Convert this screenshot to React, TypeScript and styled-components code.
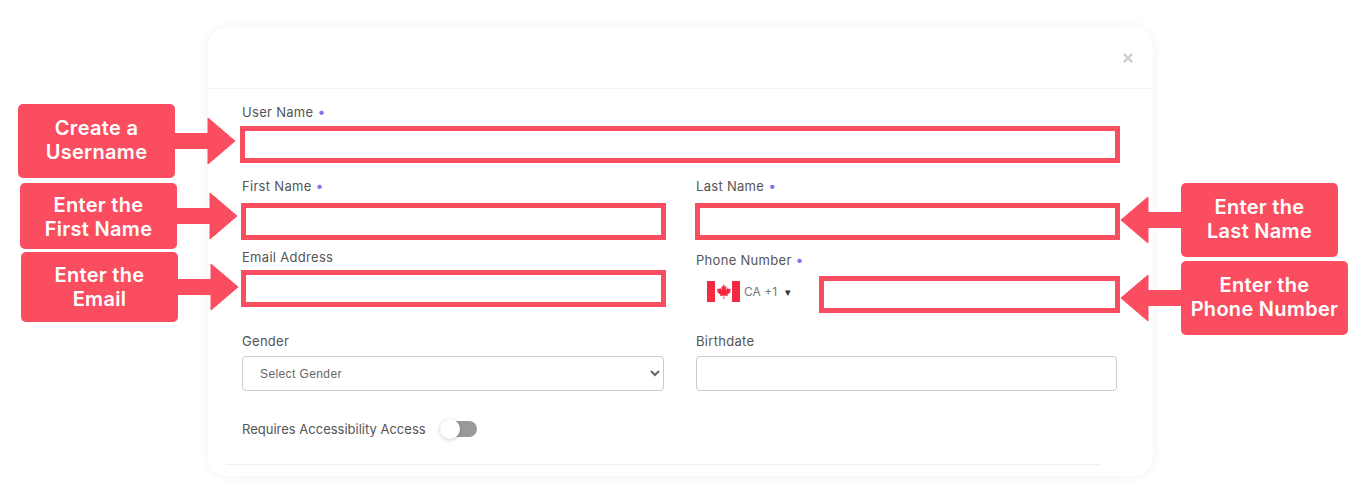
import styled, { createGlobalStyle } from 'styled-components';
import { FaTimes } from 'react-icons/fa';

const GlobalStyle = createGlobalStyle`
  html, body {
    margin: 0;
    background: #fff;
    font-family: 'Inter', 'Liberation Sans', sans-serif;
  }
  * {
    box-sizing: border-box;
  }
`;

const callouts = [
  { x: 18, y: 104, w: 157, h: 74, arrowTop: 14, side: 'left', drop: -1, lines: ['Create a', 'Username'] },
  { x: 20, y: 183, w: 157, h: 66, arrowTop: 10, side: 'left', drop: 1, lines: ['Enter the', 'First Name'] },
  { x: 21, y: 252, w: 157, h: 70, arrowTop: 12, side: 'left', drop: 0, lines: ['Enter the', 'Email'] },
  { x: 1181, y: 183, w: 157, h: 74, arrowTop: 14, side: 'right', drop: -1, lines: ['Enter the', 'Last Name'] },
  { x: 1181, y: 261, w: 167, h: 74, arrowTop: 14, side: 'right', drop: -1, lines: ['Enter the', 'Phone Number'] },
];

export default function App() {
  return (
    <Page>
      <GlobalStyle />
      <Modal>
        <Header>
          <CloseIcon />
        </Header>
        <Body>
          <Row $top={16}>
            <Field $wide>
              <Label $gap={5}>
                User Name <Dot>•</Dot>
              </Label>
              <MarkedInput $left={2} $right={3} />
            </Field>
          </Row>
          <Row $top={16}>
            <Field>
              <Label $gap={8}>
                First Name <Dot>•</Dot>
              </Label>
              <MarkedInput $left={1} $right={2} />
            </Field>
            <Field>
              <Label $gap={8}>
                Last Name <Dot>•</Dot>
              </Label>
              <MarkedInput $left={1} $right={3} />
            </Field>
          </Row>
          <Row $top={10}>
            <Field>
              <Label $gap={4}>Email Address</Label>
              <MarkedInput $left={1} $right={2} />
            </Field>
            <Field $offset={3}>
              <Label $gap={7}>
                Phone Number <Dot>•</Dot>
              </Label>
              <PhoneRow>
                <CountryPicker>
                  <CanadaFlag />
                  <CountryCode>CA +1</CountryCode>
                  <Caret>▾</Caret>
                </CountryPicker>
                <MarkedInput $left={2} $right={3} />
              </PhoneRow>
            </Field>
          </Row>
          <Row $top={21}>
            <Field>
              <Label $gap={6}>Gender</Label>
              <GenderSelect defaultValue=''>
                <option value=''>Select Gender</option>
              </GenderSelect>
            </Field>
            <Field>
              <Label $gap={6}>Birthdate</Label>
              <PlainInput />
            </Field>
          </Row>
          <ToggleRow>
            <ToggleLabel>Requires Accessibility Access</ToggleLabel>
            <Toggle>
              <Knob />
            </Toggle>
          </ToggleRow>
          <FooterRule />
        </Body>
      </Modal>

      {callouts.map((c) => (
        <Callout key={c.lines.join()} $x={c.x} $y={c.y} $w={c.w} $h={c.h} $drop={c.drop}>
          {c.lines.map((line) => (
            <span key={line}>{line}</span>
          ))}
          <Arrow $side={c.side} $top={c.arrowTop} viewBox='-1 -1 62 48'>
            <path d='M0 15.5H33V0L60 23L33 46V30.5H0Z' />
          </Arrow>
        </Callout>
      ))}
    </Page>
  );
}

function CanadaFlag() {
  return (
    <svg width='33' height='21' viewBox='0 0 33 21'>
      <rect width='33' height='21' fill='#fff' />
      <rect width='8' height='21' fill='#f5293f' />
      <rect x='25' width='8' height='21' fill='#f5293f' />
      <path
        d='M16.5 3l1.5 2.8 1.5-.7-.6 3.6 2-2 .5 1.4 2.4-.4-.8 2.5 1 .6-3.6 3 .4 1.300-3.600-.5.200 3.400h-1l.200-3.400-3.600.5.400-1.300-3.600-3 1-.6-.8-2.500 2.400.4.500-1.400 2 2-.6-3.600 1.500.7z'
        fill='#f5293f'
      />
    </svg>
  );
}

const Page = styled.div`
  position: relative;
  width: 1368px;
  height: 499px;
  overflow: hidden;
  padding: 27px 0 0 208px;
`;

const Modal = styled.div`
  width: 945px;
  height: 449px;
  background: #fff;
  border-radius: 20px;
  box-shadow: 0 0 12px rgba(0, 0, 0, 0.06);
`;

const Header = styled.div`
  height: 62px;
  display: flex;
  align-items: center;
  justify-content: flex-end;
  padding: 0 18px 0 0;
  border-bottom: 1px solid #f3f3f3;
`;

const CloseIcon = styled(FaTimes)`
  font-size: 14px;
  color: #d0d0d0;
  margin-top: 1px;
`;

const Body = styled.div`
  padding: 0 36px 0 34px;
`;

const Row = styled.div<{ $top: number }>`
  display: grid;
  grid-template-columns: 422px 421px;
  column-gap: 32px;
  align-items: start;
  margin-top: ${(p) => p.$top}px;
`;

const Field = styled.div<{ $wide?: boolean; $offset?: number }>`
  grid-column: ${(p) => (p.$wide ? '1 / -1' : 'auto')};
  padding-top: ${(p) => p.$offset || 0}px;
`;

const Label = styled.div<{ $gap: number }>`
  height: 16px;
  line-height: 14px;
  font-size: 13px;
  letter-spacing: 0.3px;
  color: #555;
  margin-bottom: ${(p) => p.$gap}px;
`;

const Dot = styled.span`
  color: #7b76f0;
  font-size: 14px;
`;

const MarkedInput = styled.input<{ $left: number; $right: number }>`
  display: block;
  width: calc(100% + ${(p) => p.$left + p.$right}px);
  min-width: 0;
  height: 37px;
  margin: 0 ${(p) => -p.$right}px 0 ${(p) => -p.$left}px;
  padding: 0;
  background: #fff;
  border: 5px solid #fb4d60;
  border-radius: 0;
  outline: none;
`;

const PlainInput = styled.input`
  display: block;
  width: 100%;
  height: 35px;
  background: #fff;
  border: 1px solid #ccc;
  border-radius: 4px;
  outline: none;
`;

const GenderSelect = styled.select`
  display: block;
  width: 100%;
  height: 35px;
  padding-left: 13px;
  background: #fff;
  border: 1px solid #ccc;
  border-radius: 4px;
  font-family: 'Liberation Sans', Arial, sans-serif;
  font-size: 12px;
  letter-spacing: 0.4px;
  color: #666;
  outline: none;
`;

const PhoneRow = styled.div`
  display: flex;
  align-items: center;
`;

const CountryPicker = styled.div`
  flex: 0 0 125px;
  display: flex;
  align-items: center;
  padding-left: 11px;
  margin-top: -6px;
`;

const CountryCode = styled.span`
  margin-left: 4px;
  font-size: 12px;
  color: #777;
`;

const Caret = styled.span`
  margin-left: 8px;
  font-size: 11px;
  color: #333;
`;

const ToggleRow = styled.div`
  display: flex;
  align-items: center;
  gap: 16px;
  height: 16px;
  margin-top: 30px;
`;

const ToggleLabel = styled.span`
  font-size: 13px;
  color: #555;
`;

const Toggle = styled.div`
  position: relative;
  width: 35px;
  height: 16px;
  border-radius: 8px;
  background: #999;
`;

const Knob = styled.div`
  position: absolute;
  left: -2px;
  top: -2px;
  width: 20px;
  height: 20px;
  border-radius: 50%;
  background: #fff;
  box-shadow: 0 1px 4px rgba(0, 0, 0, 0.2);
`;

const FooterRule = styled.div`
  height: 1px;
  margin: 27px 16px 0 -16px;
  background: #f0f0f0;
`;

const Callout = styled.div<{ $x: number; $y: number; $w: number; $h: number; $drop: number }>`
  position: absolute;
  left: ${(p) => p.$x}px;
  top: ${(p) => p.$y}px;
  width: ${(p) => p.$w}px;
  height: ${(p) => p.$h}px;
  padding-top: ${(p) => Math.max(p.$drop, 0) * 2}px;
  padding-bottom: ${(p) => Math.max(-p.$drop, 0) * 2}px;
  display: flex;
  flex-direction: column;
  align-items: center;
  justify-content: center;
  background: #fb4d60;
  border-radius: 5px;
  color: #fff;
  font-size: 20px;
  font-weight: 600;
  letter-spacing: 0.3px;
  line-height: 24px;
  white-space: nowrap;
`;

const Arrow = styled.svg<{ $side: string; $top: number }>`
  position: absolute;
  top: ${(p) => p.$top - 1}px;
  ${(p) => (p.$side === 'left' ? 'left: calc(100% - 1px);' : 'right: calc(100% - 1px); transform: scaleX(-1);')}
  width: 62px;
  height: 48px;

  path {
    fill: #fb4d60;
    stroke: #fb4d60;
    stroke-width: 1;
    stroke-linejoin: round;
  }
`;
